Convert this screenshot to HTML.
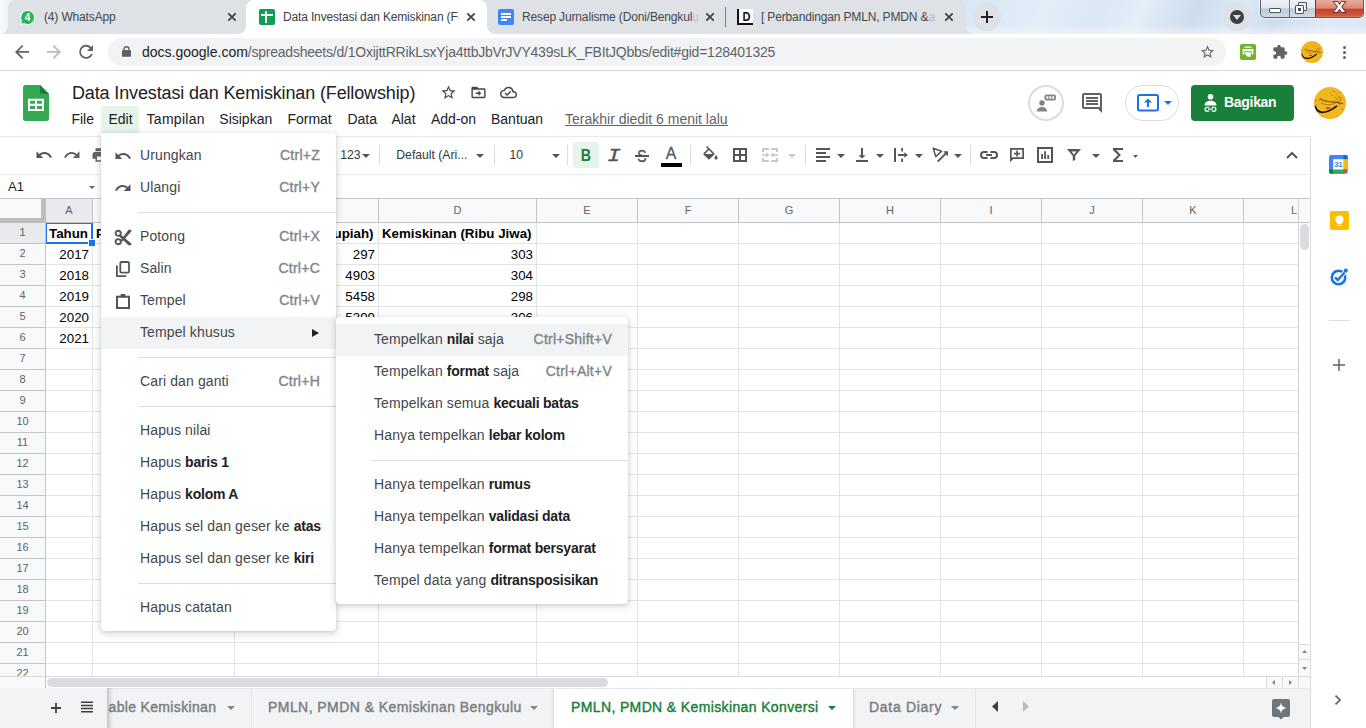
<!DOCTYPE html>
<html lang="id">
<head>
<meta charset="utf-8">
<title>Data Investasi dan Kemiskinan (Fellowship) - Google Spreadsheet</title>
<style>
*{box-sizing:border-box;margin:0;padding:0}
html,body{width:1366px;height:728px;overflow:hidden;background:#fff;font-family:"Liberation Sans",sans-serif;color:#202124}
.abs{position:absolute}
#root{position:relative;width:1366px;height:728px;overflow:hidden}
svg{display:block;overflow:visible}
/* ---------- browser chrome ---------- */
#tabstrip{left:0;top:0;width:1366px;height:34px;background:linear-gradient(90deg,rgba(255,255,255,.8) 0,rgba(255,255,255,0) 18px),linear-gradient(to bottom,rgba(255,255,255,0) 0,rgba(255,255,255,0) 72%,rgba(240,243,248,.75) 100%),linear-gradient(112deg,rgba(255,255,255,0) 0,rgba(255,255,255,.3) 4%,rgba(255,255,255,0) 9%,rgba(255,255,255,0) 70%,rgba(255,255,255,.28) 76%,rgba(255,255,255,.05) 80%,rgba(255,255,255,.3) 83%,rgba(140,165,200,.16) 87%,rgba(255,255,255,.1) 90%,rgba(140,165,200,.14) 93%,rgba(255,255,255,.2) 97%,rgba(255,255,255,0) 100%),#d9e6f5}
.tab{top:0;height:34px;background:#dee1e6;border-radius:8px 8px 0 0}
.tab.active{background:#fff}
.tabtitle{top:9px;letter-spacing:-.15px;font-size:12px;line-height:16px;color:#45474a;white-space:nowrap;overflow:hidden}
.tab.active .tabtitle{color:#3c4043}
#navbar{left:0;top:34px;width:1366px;height:36px;background:#fff}
#navline{left:0;top:70px;width:1366px;height:1px;background:#d5d7da}
#omni{left:108px;top:38px;width:1118px;height:28px;border-radius:14px;background:#f1f3f4}
#url{left:142px;top:44px;font-size:14px;line-height:17px;color:#5f6368;white-space:nowrap;}
#url b{font-weight:normal;color:#202124}
/* ---------- docs header ---------- */
#title{left:72px;top:81px;letter-spacing:-.14px;font-size:18px;line-height:24px;color:#202124;white-space:nowrap}
.menu{top:109px;height:20px;font-size:14px;line-height:20px;color:#202124;white-space:nowrap}
#lastedit{left:565px;top:109px;font-size:14px;line-height:20px;color:#5f6368;white-space:nowrap;background:linear-gradient(#5f6368,#5f6368) 0 16px/100% 1px no-repeat}
/* ---------- toolbar ---------- */
#tbtop{left:0;top:136px;width:1311px;height:1px;background:#e8eaed}
#tbbot{left:0;top:174px;width:1311px;height:1px;background:#e8eaed}
.tbsep{top:145px;width:1px;height:20px;background:#dadce0}
.tbtxt{font-size:12.2px;line-height:16px;color:#33373b;white-space:nowrap}
/* ---------- grid ---------- */
#gridbg{left:0;top:198px;width:1310px;height:490px;background:#fff}
.colh{top:199px;height:23px;font-size:11px;line-height:23px;text-align:center;color:#5f6368}
.rowh{left:0;width:45px;height:20px;font-size:11px;line-height:19px;text-align:center;color:#5f6368}
.vl{top:223px;width:1px;height:453px;background:#e2e3e3}
.hvl{top:199px;width:1px;height:23px;background:#c4c4c4}
.hl{left:46px;width:1252px;height:1px;background:#e2e3e3}
.rhl{left:0;width:45px;height:1px;background:#c4c4c4}
.cell{height:21px;font-size:13.33px;line-height:22px;color:#000;white-space:nowrap;overflow:hidden;font-family:"Liberation Sans",sans-serif}
.r{text-align:right}
.c{text-align:center}
.bd{font-weight:bold}
/* ---------- menus ---------- */
.popup{background:#fff;box-shadow:0 2px 6px 2px rgba(60,64,67,.14),0 1px 3px rgba(60,64,67,.15)}
.mi{position:absolute;left:0;right:0;height:32px;font-size:14px;line-height:32px;color:#43474b;white-space:nowrap}
.mi.hov{background:#f1f3f4}
.mi .lab{position:absolute;top:-1px;letter-spacing:.12px}
.mi .sc{position:absolute;top:-1px;right:16px;color:#80868b;-webkit-text-stroke:.4px #80868b;letter-spacing:.25px}
.mi b{font-weight:bold;color:#202124;letter-spacing:-.22px}
.msep{position:absolute;right:0;height:1px;background:#dadce0}
/* ---------- bottom ---------- */
#bottombar{left:0;top:688px;width:1311px;height:40px;background:#f1f3f4}
.stab{top:688px;height:40px;font-size:14px;line-height:38px;color:#787d83;white-space:nowrap;font-weight:normal;-webkit-text-stroke:.4px;letter-spacing:.44px}
/* ---------- side panel ---------- */
#side{left:1311px;top:137px;width:55px;height:591px;background:#fff}
#sideline{left:1310px;top:136px;width:1px;height:592px;background:#dadce0}
</style>
</head>
<body>
<div id="root">

<!-- ================= BROWSER TAB STRIP ================= -->
<div id="tabstrip" class="abs"></div>

<!-- tab shapes -->
<svg class="abs" style="left:0;top:0" width="1366" height="34" viewBox="0 0 1366 34">
  <path d="M0 34a8 8 0 0 0 8-8V8a8 8 0 0 1 8-8H958a8 8 0 0 1 8 8V26a8 8 0 0 0 8 8z" fill="#dee1e6"/>
  <path d="M238 34a8 8 0 0 0 8-8V8a8 8 0 0 1 8-8H479a8 8 0 0 1 8 8V26a8 8 0 0 0 8 8z" fill="#fff"/>
  <rect x="725" y="7" width="1" height="20" fill="#808387"/><path d="M719 0Q725.500 .5 725.500 5.500 725.500 .5 732 0z" fill="#dce8f6"/>
</svg>
<!-- tab 1 -->
<svg class="abs" style="left:19px;top:9px" width="17" height="17" viewBox="0 0 17 17"><path d="M8.6 1.2a7.2 7.2 0 0 0-6.2 10.9L1.2 16l4-1.2A7.2 7.2 0 1 0 8.6 1.2z" fill="#fff"/><path d="M8.6 2.1a6.4 6.4 0 0 0-5.4 9.8l-.8 2.9 3-.8A6.4 6.4 0 1 0 8.6 2.100z" fill="#1fb855"/><text x="8.6" y="12.2" font-size="10" font-weight="bold" text-anchor="middle" fill="#fff" font-family="Liberation Sans, sans-serif">4</text></svg>
<div class="abs tabtitle" style="left:44px;width:170px">(4) WhatsApp</div>
<svg class="abs" style="left:227px;top:12px" width="10" height="10" viewBox="0 0 10 10"><path d="M1.300 1.300l7.400 7.400M8.700 1.300l-7.400 7.400" stroke="#3c4043" stroke-width="1.700" fill="none"/></svg>
<!-- tab 2 (active) -->
<div class="abs" style="left:259px;top:9px;width:16px;height:16px;background:#0f9d58;border-radius:2px"></div>
<div class="abs" style="left:265px;top:11px;width:2px;height:12px;background:#fff"></div>
<div class="abs" style="left:261px;top:14px;width:12px;height:2px;background:#fff"></div>
<div class="abs tabtitle" id="tt2" style="left:283px;width:176px;color:#3c4043">Data Investasi dan Kemiskinan (F<span style="color:#c9cbce">e</span></div>
<svg class="abs" style="left:466px;top:12px" width="10" height="10" viewBox="0 0 10 10"><path d="M1.300 1.300l7.400 7.400M8.700 1.300l-7.400 7.400" stroke="#3c4043" stroke-width="1.700" fill="none"/></svg>
<!-- tab 3 -->
<div class="abs" style="left:498px;top:9px;width:16px;height:16px;background:#4285f4;border-radius:2px"></div>
<div class="abs" style="left:501px;top:13px;width:10px;height:2px;background:#fff"></div>
<div class="abs" style="left:501px;top:16px;width:10px;height:2px;background:#fff"></div>
<div class="abs" style="left:501px;top:19px;width:6px;height:2px;background:#fff"></div>
<div class="abs tabtitle" id="tt3" style="left:522px;width:176px">Resep Jurnalisme (Doni/Bengkul<span style="color:#b9bcc1">u</span></div>
<svg class="abs" style="left:705px;top:12px" width="10" height="10" viewBox="0 0 10 10"><path d="M1.300 1.300l7.400 7.400M8.700 1.300l-7.400 7.400" stroke="#3c4043" stroke-width="1.700" fill="none"/></svg>
<!-- tab 4 -->
<div class="abs" style="left:737px;top:9px;width:16px;height:16px;background:#fff;border-left:2px solid #111;border-bottom:2px solid #111"></div>
<div class="abs" style="left:739.500px;top:8.700px;width:13px;height:16px;font-size:13px;line-height:16px;font-weight:bold;color:#111;text-align:center;transform:scaleX(.85)">D</div>
<div class="abs tabtitle" id="tt4" style="left:761px;width:176px">[ Perbandingan PMLN, PMDN &amp;<span style="color:#b9bcc1">a</span></div>
<svg class="abs" style="left:944px;top:12px" width="10" height="10" viewBox="0 0 10 10"><path d="M1.300 1.300l7.400 7.400M8.700 1.300l-7.400 7.400" stroke="#3c4043" stroke-width="1.700" fill="none"/></svg>

<!-- new tab button -->
<div class="abs" style="left:973px;top:3px;width:28px;height:28px;border-radius:14px;background:#dee1e6"></div>
<svg class="abs" style="left:981px;top:11px" width="12" height="12" viewBox="0 0 12 12"><path d="M6 0v12M0 6h12" stroke="#202124" stroke-width="2" fill="none"/></svg>

<!-- tab search -->
<div class="abs" style="left:1223px;top:3px;width:28px;height:28px;border-radius:14px;background:#dee1e6"></div>
<div class="abs" style="left:1230px;top:10px;width:14px;height:14px;border-radius:7px;background:#3c4043"></div>
<svg class="abs" style="left:1233px;top:15px" width="8" height="5" viewBox="0 0 8 5"><path d="M0 0h8L4 5z" fill="#dee1e6"/></svg>

<!-- window controls -->
<div class="abs" style="left:1260px;top:0;width:104px;height:18px;border:1px solid #5b6069;border-top:0;border-radius:0 0 5px 5px;background:linear-gradient(#eef2f8 0,#e2e8f1 46%,#c0c9d6 52%,#d2dae6 100%);overflow:hidden;box-shadow:0 0 0 1px rgba(255,255,255,.6)">
  <div class="abs" style="left:28px;top:0;width:1px;height:18px;background:#6b717b"></div>
  <div class="abs" style="left:54px;top:0;width:49px;height:18px;background:linear-gradient(#e9aa9d 0,#dc8776 45%,#c4432b 52%,#cf573b 85%,#e08a6a 100%);border-left:1px solid #6b3a34"></div>
  <div class="abs" style="left:8px;top:8px;width:12px;height:5px;background:#fff;border:1px solid #4d525c;border-radius:1px"></div>
  <div class="abs" style="left:37px;top:2px;width:9px;height:9px;border:1px solid #4d525c;background:#eef1f6;border-radius:1px"></div>
  <div class="abs" style="left:34px;top:5px;width:9px;height:9px;border:1px solid #4d525c;background:#fff;border-radius:1px"></div>
  <div class="abs" style="left:37px;top:8px;width:3px;height:3px;background:#4d525c"></div>
  <div class="abs" style="left:54px;top:-4px;width:49px;height:20px;text-align:center;font-size:18px;line-height:20px;font-weight:bold;color:#fff;-webkit-text-stroke:1.6px #4a2a28;paint-order:stroke fill;transform:scaleX(1.1)">x</div>
</div>

<!-- ================= NAV BAR ================= -->
<div id="navbar" class="abs"></div>
<div id="navline" class="abs"></div>
<div id="omni" class="abs"></div>
<div id="url" class="abs"><b>docs.google.com</b><span style="letter-spacing:-.23px">/spreadsheets/d/1OxijttRRikLsxYja4ttbJbVrJVY439sLK_FBItJQbbs/edit#gid=128401325</span></div>

<svg class="abs" style="left:14px;top:44px" width="16" height="16" viewBox="0 0 16 16"><path d="M15 7.1H4.4l4.9-4.9L8 1 1 8l7 7 1.300-1.300-4.900-4.900H15z" fill="#5f6368"/></svg>
<svg class="abs" style="left:46px;top:44px" width="16" height="16" viewBox="0 0 16 16"><path d="M1 7.1h10.600L6.700 2.200 8 1l7 7-7 7-1.300-1.300 4.900-4.900H1z" fill="#babcbe"/></svg>
<svg class="abs" style="left:78px;top:44px" width="16" height="16" viewBox="0 0 16 16"><path d="M13.100 2.900A7 7 0 1 0 14.800 10h-1.900A5.200 5.200 0 1 1 11.800 4.200L9 7h6V1z" fill="#5f6368"/></svg>
<svg class="abs" style="left:121.500px;top:45.500px" width="9" height="11.700" viewBox="0 0 10 13"><path d="M8.500 4.500V3.600a3.500 3.500 0 0 0-7 0v.9H1a1 1 0 0 0-1 1V11a1 1 0 0 0 1 1h8a1 1 0 0 0 1-1V5.500a1 1 0 0 0-1-1zM3 3.600a2 2 0 0 1 4 0v.9H3z" fill="#5f6368"/></svg>
<svg class="abs" style="left:1199px;top:44px" width="17" height="16" viewBox="0 0 24 24"><path d="M22 9.240l-7.190-.620L12 2 9.190 8.630 2 9.240l5.460 4.730L5.820 21 12 17.270 18.180 21l-1.630-7.030L22 9.240zM12 15.400l-3.760 2.270 1-4.280-3.320-2.880 4.380-.380L12 6.100l1.710 4.040 4.380.380-3.320 2.880 1 4.280L12 15.400z" fill="#5f6368"/></svg>
<div class="abs" style="left:1240px;top:44px;width:16px;height:16px;background:#6eb42c;border-radius:2px"></div>
<svg class="abs" style="left:1240px;top:44px" width="16" height="16" viewBox="0 0 16 16"><path d="M4.500 2.600h7v1.200h-7zM2.600 5h10.800v5.600h-1.700V7.300H4.300v3.300H2.600zM5.200 8.300h5.600v4.400H7.600L5.200 10.400z" fill="#fff"/></svg>
<svg class="abs" style="left:1272px;top:44px" width="16" height="16" viewBox="0 0 24 24"><path d="M20.500 11H19V7c0-1.100-.9-2-2-2h-4V3.500a2.500 2.500 0 0 0-5 0V5H4c-1.100 0-1.990.9-1.990 2v3.800H3.500c1.490 0 2.700 1.210 2.700 2.700s-1.210 2.700-2.700 2.700H2V20c0 1.100.9 2 2 2h3.800v-1.500c0-1.490 1.210-2.700 2.700-2.700s2.700 1.210 2.700 2.700V22H17c1.100 0 2-.9 2-2v-4h1.500a2.500 2.500 0 0 0 0-5z" fill="#5f6368"/></svg>
<div class="abs" style="left:1301px;top:41px;width:22px;height:22px;border-radius:11px;background:#f4b620;overflow:hidden"><svg width="22" height="22" viewBox="0 0 32 32"><path d="M1.300 19.500C3.500 27.500 13 27 22.500 19.200" stroke="#17110a" stroke-width="1.700" fill="none" stroke-linecap="round"/><path d="M5.500 13.200c.3-1.600 1.800-1.800 2-.4C11 14.300 17 15 23 15.300l6 1.500" stroke="#3b3320" stroke-width="1" fill="none" opacity=".85"/><path d="M7 15.500c2 1.700 5 2.300 8 2.200 4-.2 7-1.800 10-3.700l2.500-3.500M24 15.500l2.200 3.300M21.500 13l3.500-3" stroke="#6f5a22" stroke-width=".8" fill="none" opacity=".75"/><rect x="12" y="20.300" width="4.200" height="1.400" fill="#e0261a"/><rect x="7" y="29.300" width="1.500" height="1" fill="#c0261a"/><g fill="#3b3320" opacity=".55"><circle cx="20" cy="4.500" r=".7"/><circle cx="23" cy="7" r=".6"/><circle cx="18" cy="8.500" r=".5"/><circle cx="25.500" cy="10" r=".7"/><circle cx="21.500" cy="10.500" r=".5"/><circle cx="27" cy="13" r=".6"/><circle cx="28.500" cy="22" r=".7"/><circle cx="23.500" cy="30" r=".8"/><circle cx="1.500" cy="13.500" r=".8"/><circle cx="2.500" cy="17.500" r=".6"/><circle cx="16.500" cy="6" r=".5"/><circle cx="26" cy="5.500" r=".5"/></g></svg></div>
<div class="abs" style="left:1343px;top:46px;width:3px;height:3px;border-radius:2px;background:#5f6368"></div>
<div class="abs" style="left:1343px;top:51px;width:3px;height:3px;border-radius:2px;background:#5f6368"></div>
<div class="abs" style="left:1343px;top:56px;width:3px;height:3px;border-radius:2px;background:#5f6368"></div>


<!-- ================= DOC HEADER ================= -->

<!-- sheets logo -->
<svg class="abs" style="left:23px;top:85px" width="26" height="36" viewBox="0 0 26 36"><path d="M2.500 0H17l9 9v24.500a2.500 2.500 0 0 1-2.500 2.500h-21A2.500 2.500 0 0 1 0 33.500v-31A2.500 2.500 0 0 1 2.500 0z" fill="#34a853"/><path d="M17 0l9 9h-6.500A2.500 2.500 0 0 1 17 6.500z" fill="#188038"/><path d="M5 13.700h16v12.400H5zM7 15.800v3h5v-3zM14 15.800v3h5v-3zM7 20.900v3h5v-3zM14 20.900v3h5v-3z" fill="#fff" fill-rule="evenodd"/></svg>
<div id="title" class="abs">Data Investasi dan Kemiskinan (Fellowship)</div>
<!-- star / move / cloud -->
<svg class="abs" style="left:440px;top:84px" width="17" height="17" viewBox="0 0 24 24"><path d="M22 9.240l-7.190-.620L12 2 9.190 8.630 2 9.240l5.460 4.730L5.820 21 12 17.270 18.180 21l-1.630-7.030L22 9.240zM12 15.400l-3.760 2.270 1-4.280-3.320-2.880 4.380-.380L12 6.100l1.710 4.040 4.380.380-3.320 2.880 1 4.280L12 15.400z" fill="#444746"/></svg>
<svg class="abs" style="left:470px;top:84px" width="17" height="17" viewBox="0 0 24 24"><path d="M20 6h-8l-2-2H4c-1.100 0-1.990.9-1.990 2L2 18c0 1.100.9 2 2 2h16c1.100 0 2-.9 2-2V8c0-1.100-.9-2-2-2zm0 12H4V8h16v10zm-8.010-1l4-4-4-4v3H8v2h3.990v3z" fill="#444746"/></svg>
<svg class="abs" style="left:500px;top:84px" width="17" height="17" viewBox="0 0 24 24"><path d="M19.350 10.040A7.490 7.490 0 0 0 12 4C9.110 4 6.600 5.640 5.350 8.040A5.994 5.994 0 0 0 0 14c0 3.310 2.690 6 6 6h13c2.760 0 5-2.240 5-5 0-2.640-2.050-4.780-4.650-4.960zM19 18H6c-2.210 0-4-1.790-4-4s1.790-4 4-4h.710C7.370 7.690 9.480 6 12 6c3.040 0 5.500 2.460 5.500 5.500v.5H19c1.660 0 3 1.340 3 3s-1.340 3-3 3zm-9-3.820l-2.090-2.090L6.500 13.500 10 17l6.010-6.010-1.410-1.410z" fill="#444746"/></svg>
<!-- menubar -->
<div class="abs" style="left:101px;top:106px;width:38px;height:30px;background:#e6f4ea;border-radius:4px 4px 0 0"></div>
<div class="abs menu" style="left:71.400px">File</div>
<div class="abs menu" style="left:108.500px">Edit</div>
<div class="abs menu" style="left:146.500px;letter-spacing:.3px">Tampilan</div>
<div class="abs menu" style="left:219.300px">Sisipkan</div>
<div class="abs menu" style="left:287.400px">Format</div>
<div class="abs menu" style="left:347.400px">Data</div>
<div class="abs menu" style="left:391.400px">Alat</div>
<div class="abs menu" style="left:431px">Add-on</div>
<div class="abs menu" style="left:491px">Bantuan</div>
<div id="lastedit" class="abs">Terakhir diedit 6 menit lalu</div>
<!-- right header buttons -->
<div class="abs" style="left:1028px;top:85px;width:36px;height:36px;border-radius:18px;border:2px solid #dadce0"></div>
<svg class="abs" style="left:1036px;top:92px" width="21" height="21" viewBox="0 0 21 21"><circle cx="6" cy="11" r="2.700" fill="#80868b"/><path d="M.800 19.500c0-3 2.300-4.600 5.200-4.600s5.200 1.600 5.200 4.600z" fill="#80868b"/><rect x="8.500" y="2.500" width="11.500" height="6" rx="2" fill="#80868b"/><rect x="10.400" y="4.300" width="1.900" height="2.400" fill="#fff"/><rect x="13.300" y="4.300" width="1.900" height="2.400" fill="#fff"/><rect x="16.200" y="4.300" width="1.900" height="2.400" fill="#fff"/></svg>
<svg class="abs" style="left:1082px;top:93px" width="20" height="20" viewBox="0 0 20 20"><path d="M2 0h16a2 2 0 0 1 2 2v18l-4-4H2a2 2 0 0 1-2-2V2a2 2 0 0 1 2-2zm0 2v12h16V2zm2 2h12v2H4zm0 3h12v2H4zm0 3h12v2H4z" fill="#5f6368" fill-rule="evenodd"/></svg>
<div class="abs" style="left:1125px;top:85px;width:54px;height:36px;border-radius:18px;border:1px solid #dadce0;background:#fff"></div>
<svg class="abs" style="left:1137px;top:94px" width="22" height="18" viewBox="0 0 22 18"><rect x="1" y="1" width="20" height="15.500" rx="1.500" fill="none" stroke="#1a73e8" stroke-width="2"/><path d="M11 4.500l4 4h-3v4.500h-2V8.500H7z" fill="#1a73e8"/></svg>
<svg class="abs" style="left:1164px;top:101px" width="8" height="4" viewBox="0 0 8 4"><path d="M0 0h8L4 4z" fill="#1a73e8"/></svg>
<div class="abs" style="left:1191px;top:85px;width:103px;height:36px;border-radius:4px;background:#188038"></div>
<svg class="abs" style="left:1203px;top:93px" width="15" height="19" viewBox="0 0 15 19"><circle cx="7.500" cy="3.700" r="2.800" fill="#fff"/><path d="M1.500 12.500c0-3.300 2.600-4.800 6-4.800s6 1.500 6 4.800z" fill="#fff"/><path d="M6.200 14.300H4a1.900 1.900 0 0 0 0 3.800h2.200M8.800 14.300H11a1.900 1.900 0 0 1 0 3.800H8.800M5 16.200h5" stroke="#fff" stroke-width="1.300" fill="none"/></svg>
<div class="abs" id="share" style="left:1224px;top:93px;font-size:14px;line-height:18px;font-weight:bold;color:#fff;white-space:nowrap;letter-spacing:-.3px">Bagikan</div>
<div class="abs" style="left:1314px;top:87px;width:32px;height:32px;border-radius:16px;background:#f4b620;overflow:hidden"><svg width="32" height="32" viewBox="0 0 32 32"><path d="M1.300 19.500C3.500 27.500 13 27 22.500 19.200" stroke="#17110a" stroke-width="1.700" fill="none" stroke-linecap="round"/><path d="M5.500 13.200c.3-1.600 1.800-1.800 2-.4C11 14.300 17 15 23 15.300l6 1.500" stroke="#3b3320" stroke-width="1" fill="none" opacity=".85"/><path d="M7 15.500c2 1.700 5 2.300 8 2.200 4-.2 7-1.800 10-3.700l2.500-3.500M24 15.500l2.200 3.300M21.500 13l3.500-3" stroke="#6f5a22" stroke-width=".8" fill="none" opacity=".75"/><rect x="12" y="20.300" width="4.200" height="1.400" fill="#e0261a"/><rect x="7" y="29.300" width="1.500" height="1" fill="#c0261a"/><g fill="#3b3320" opacity=".55"><circle cx="20" cy="4.500" r=".7"/><circle cx="23" cy="7" r=".6"/><circle cx="18" cy="8.500" r=".5"/><circle cx="25.500" cy="10" r=".7"/><circle cx="21.500" cy="10.500" r=".5"/><circle cx="27" cy="13" r=".6"/><circle cx="28.500" cy="22" r=".7"/><circle cx="23.500" cy="30" r=".8"/><circle cx="1.500" cy="13.500" r=".8"/><circle cx="2.500" cy="17.500" r=".6"/><circle cx="16.500" cy="6" r=".5"/><circle cx="26" cy="5.500" r=".5"/></g></svg></div>


<!-- ================= TOOLBAR ================= -->
<div id="tbtop" class="abs"></div>
<div id="tbbot" class="abs"></div>
<svg class="abs" style="left:34.5px;top:146px" width="18" height="18" viewBox="0 0 24 24"><path d="M12.500 8c-2.650 0-5.050.990-6.900 2.600L2 7v9h9l-3.620-3.620c1.390-1.160 3.160-1.880 5.120-1.880 3.540 0 6.550 2.310 7.600 5.500l2.370-.780C21.080 11.030 17.150 8 12.500 8z" fill="#52565c"/></svg>
<svg class="abs" style="left:63px;top:146px" width="18" height="18" viewBox="0 0 24 24"><path d="M18.400 10.600C16.550 8.990 14.150 8 11.500 8c-4.650 0-8.580 3.030-9.960 7.220L3.900 16c1.050-3.190 4.050-5.500 7.600-5.500 1.950 0 3.730.720 5.120 1.880L13 16h9V7l-3.600 3.600z" fill="#5f6368"/></svg>
<svg class="abs" style="left:90.5px;top:146px" width="18" height="18" viewBox="0 0 24 24"><path d="M19 8H5c-1.660 0-3 1.340-3 3v6h4v4h12v-4h4v-6c0-1.660-1.340-3-3-3zm-3 11H8v-5h8v5zm3-7c-.550 0-1-.450-1-1s.450-1 1-1 1 .450 1 1-.450 1-1 1zm-1-9H6v4h12V3z" fill="#5f6368"/></svg>
<div class="abs tbtxt" id="t123" style="left:340.200px;top:147px">123</div>
<svg class="abs" style="left:362px;top:154px" width="8" height="4" viewBox="0 0 8 4"><path d="M0 0h8L4.0 4z" fill="#52565c"/></svg>
<div class="abs tbsep" style="left:379px"></div>
<div class="abs tbtxt" id="tfont" style="left:396.300px;top:147px">Default (Ari...</div>
<svg class="abs" style="left:476px;top:154px" width="8" height="4" viewBox="0 0 8 4"><path d="M0 0h8L4.0 4z" fill="#52565c"/></svg>
<div class="abs tbsep" style="left:494px"></div>
<div class="abs tbtxt" id="tsize" style="left:509.500px;top:147px">10</div>
<svg class="abs" style="left:551.5px;top:154px" width="8" height="4" viewBox="0 0 8 4"><path d="M0 0h8L4.0 4z" fill="#52565c"/></svg>
<div class="abs tbsep" style="left:567px"></div>
<div class="abs" style="left:573px;top:142px;width:26px;height:26px;border-radius:3px;background:#e6f4ea"></div>
<div class="abs" style="left:573px;top:144.300px;width:26px;height:22px;font-size:16.500px;line-height:22px;font-weight:bold;color:#188038;text-align:center;transform:scaleX(.86)">B</div>
<div class="abs" style="left:601px;top:144.500px;width:26px;height:22px;font-size:18px;line-height:22px;font-style:italic;-webkit-text-stroke:.35px #52565c;color:#52565c;text-align:center;font-family:'Liberation Mono',monospace;transform:scaleX(1.25)">I</div>
<div class="abs" style="left:629px;top:144.600px;width:26px;height:22px;font-size:16.500px;line-height:22px;color:#52565c;text-align:center;-webkit-text-stroke:.45px #52565c;transform:scaleX(.84)">S</div><div class="abs" style="left:636px;top:154.500px;width:12px;height:3px;background:#fff"></div><div class="abs" style="left:635px;top:155px;width:14px;height:2px;background:#52565c"></div>
<div class="abs" style="left:658px;top:142.100px;width:26px;height:22px;font-size:16.500px;line-height:22px;color:#52565c;text-align:center;-webkit-text-stroke:.3px #52565c;transform:scaleX(.96)">A</div><div class="abs" style="left:661px;top:163px;width:21px;height:4px;background:#000"></div>
<div class="abs tbsep" style="left:690px"></div>
<svg class="abs" style="left:700.500px;top:146px" width="19" height="19" viewBox="0 0 24 24"><path d="M16.560 8.940L7.620 0 6.210 1.410l2.380 2.380-5.150 5.150c-.590.590-.590 1.540 0 2.120l5.500 5.500c.290.290.680.440 1.060.440s.770-.150 1.060-.440l5.500-5.500c.590-.580.590-1.530 0-2.120zM5.210 10L10 5.210 14.790 10H5.210zM19 11.500s-2 2.170-2 3.500c0 1.100.9 2 2 2s2-.9 2-2c0-1.330-2-3.500-2-3.500z" fill="#52565c"/></svg>
<svg class="abs" style="left:733px;top:148px" width="14" height="14" viewBox="0 0 14 14"><path d="M0 0h14v14H0zM2 2v4h4V2zM8 2v4h4V2zM2 8v4h4V8zM8 8v4h4V8z" fill="#52565c" fill-rule="evenodd"/></svg>
<svg class="abs" style="left:762px;top:148px" width="16" height="14" viewBox="0 0 16 14"><path d="M0 0h6.800v2H2v2H0zM9.200 0H16v4h-2V2H9.200zM0 14v-4h2v2h4.800v2zM16 14H9.200v-2H14v-2h2zM0 6.200h4.300V4.400L7.600 7 4.300 9.600V7.800H0zM16 6.200h-4.300V4.400L8.400 7l3.300 2.600V7.800H16z" fill="#c6c8ca"/></svg>
<svg class="abs" style="left:788px;top:154px" width="8" height="4" viewBox="0 0 8 4"><path d="M0 0h8L4.0 4z" fill="#c6c8ca"/></svg>
<div class="abs tbsep" style="left:805px"></div>
<svg class="abs" style="left:816px;top:148px" width="14" height="14" viewBox="0 0 14 14"><path d="M0 0h14v2H0zM0 4h10v2H0zM0 8h14v2H0zM0 12h10v2H0z" fill="#52565c"/></svg>
<svg class="abs" style="left:836.5px;top:154px" width="8" height="4" viewBox="0 0 8 4"><path d="M0 0h8L4.0 4z" fill="#52565c"/></svg>
<svg class="abs" style="left:856px;top:148px" width="12" height="14" viewBox="0 0 12 14"><path d="M5 0h2v7.200h2.600L6 10.600 2.400 7.200H5zM0 12h12v2H0z" fill="#52565c"/></svg>
<svg class="abs" style="left:875.5px;top:154px" width="8" height="4" viewBox="0 0 8 4"><path d="M0 0h8L4.0 4z" fill="#52565c"/></svg>
<svg class="abs" style="left:894px;top:148px" width="14" height="14" viewBox="0 0 14 14"><path d="M0 0h2v14H0zM7.200 0h1.800v3.600H7.200zM7.200 10.400h1.800V14H7.200zM4 6h6.400V4.200L13.900 7l-3.500 2.800V8H4z" fill="#52565c"/></svg>
<svg class="abs" style="left:914.5px;top:154px" width="8" height="4" viewBox="0 0 8 4"><path d="M0 0h8L4.0 4z" fill="#52565c"/></svg>
<svg class="abs" style="left:932px;top:147px" width="17" height="16" viewBox="0 0 17 16"><path d="M1.200 1.300l8.300 2.900-2.800 2.700-2.900 2.800z" fill="none" stroke="#52565c" stroke-width="1.500" stroke-linejoin="round"/><path d="M5.600 14.700L14.300 6" stroke="#52565c" stroke-width="1.800" fill="none"/><path d="M16 4.200v5l-1.800-1.700-1.400-1.400-1.700-1.800z" fill="#52565c"/></svg>
<svg class="abs" style="left:953.5px;top:154px" width="8" height="4" viewBox="0 0 8 4"><path d="M0 0h8L4.0 4z" fill="#52565c"/></svg>
<div class="abs tbsep" style="left:970px"></div>
<svg class="abs" style="left:980px;top:151px" width="18" height="8" viewBox="0 0 18 8"><path d="M7.600 1H4a3 3 0 0 0 0 6h3.600M10.400 1H14a3 3 0 0 1 0 6h-3.600" fill="none" stroke="#52565c" stroke-width="2"/><rect x="6" y="3" width="6" height="2" fill="#52565c"/></svg>
<svg class="abs" style="left:1010px;top:148px" width="14" height="14" viewBox="0 0 14 14"><path d="M0 0h14v11H3.400L0 14zM1.700 1.700v8.200l.6-.6h10V1.700z" fill="#52565c" fill-rule="evenodd"/><path d="M6.200 2.600h1.600v2.200H10v1.600H7.800v2.200H6.200V6.400H4V4.800h2.200z" fill="#52565c"/></svg>
<svg class="abs" style="left:1037px;top:147px" width="16" height="16" viewBox="0 0 16 16"><path d="M0 0h16v16H0zM2 2v12h12V2z" fill="#52565c" fill-rule="evenodd"/><path d="M4.200 7h1.800v5H4.200zM7.200 4.200H9V12H7.200zM10.300 8.100h1.800V12h-1.800z" fill="#52565c"/></svg>
<svg class="abs" style="left:1067px;top:149px" width="14" height="12" viewBox="0 0 14 12"><path d="M0 0h14L8.200 6.900V11l-2.400 1V6.900zM4.500 2.600l2.500 2.900L9.500 2.600z" fill="#52565c" fill-rule="evenodd"/></svg>
<svg class="abs" style="left:1092.2px;top:154px" width="8" height="4" viewBox="0 0 8 4"><path d="M0 0h8L4.0 4z" fill="#52565c"/></svg>
<svg class="abs" style="left:1113px;top:148px" width="10" height="14" viewBox="0 0 10 14"><path d="M10 0H0v1.900l5 5.100-5 5.100V14h10v-2H3.100l4.800-5-4.800-5H10z" fill="#52565c"/></svg>
<svg class="abs" style="left:1133px;top:155px" width="5" height="3" viewBox="0 0 5 3"><path d="M0 0h5L2.5 3z" fill="#52565c"/></svg>
<svg class="abs" style="left:1286px;top:151px" width="12" height="8" viewBox="0 0 12 8"><path d="M1 7l5-5 5 5" fill="none" stroke="#52565c" stroke-width="2"/></svg>
<div class="abs" id="namebox" style="left:8px;top:179px;font-size:13px;line-height:16px;color:#202124">A1</div>
<svg class="abs" style="left:88.5px;top:186px" width="6" height="3" viewBox="0 0 6 3"><path d="M0 0h6L3.0 3z" fill="#5f6368"/></svg>


<!-- ================= GRID ================= -->
<div id="gridbg" class="abs"></div>
<div class="abs" style="left:0;top:199px;width:1310px;height:23px;background:#f8f9fa"></div>
<div class="abs" style="left:0;top:223px;width:45px;height:465px;background:#f8f9fa"></div>
<div class="abs" style="left:46px;top:199px;width:46px;height:23px;background:#e8eaed"></div>
<div class="abs" style="left:0;top:223px;width:45px;height:20px;background:#e8eaed"></div>
<div class="abs" style="left:0;top:198px;width:1310px;height:1px;background:#c4c4c4"></div>
<div class="abs" style="left:46px;top:222px;width:1264px;height:1px;background:#c4c4c4"></div>
<div class="abs colh" style="left:46px;width:46px">A</div><div class="abs hvl" style="left:92px"></div><div class="abs vl" style="left:92px"></div>
<div class="abs colh" style="left:93px;width:141px">B</div><div class="abs hvl" style="left:234px"></div><div class="abs vl" style="left:234px"></div>
<div class="abs colh" style="left:235px;width:143px">C</div><div class="abs hvl" style="left:378px"></div><div class="abs vl" style="left:378px"></div>
<div class="abs colh" style="left:379px;width:157px">D</div><div class="abs hvl" style="left:536px"></div><div class="abs vl" style="left:536px"></div>
<div class="abs colh" style="left:537px;width:100px">E</div><div class="abs hvl" style="left:637px"></div><div class="abs vl" style="left:637px"></div>
<div class="abs colh" style="left:638px;width:100px">F</div><div class="abs hvl" style="left:738px"></div><div class="abs vl" style="left:738px"></div>
<div class="abs colh" style="left:739px;width:100px">G</div><div class="abs hvl" style="left:839px"></div><div class="abs vl" style="left:839px"></div>
<div class="abs colh" style="left:840px;width:100px">H</div><div class="abs hvl" style="left:940px"></div><div class="abs vl" style="left:940px"></div>
<div class="abs colh" style="left:941px;width:100px">I</div><div class="abs hvl" style="left:1041px"></div><div class="abs vl" style="left:1041px"></div>
<div class="abs colh" style="left:1042px;width:100px">J</div><div class="abs hvl" style="left:1142px"></div><div class="abs vl" style="left:1142px"></div>
<div class="abs colh" style="left:1143px;width:100px">K</div><div class="abs hvl" style="left:1243px"></div><div class="abs vl" style="left:1243px"></div>
<div class="abs colh" style="left:1244px;width:54px;overflow:hidden"><div style="width:100px">L</div></div>
<div class="abs" style="left:1298px;top:199px;width:1px;height:477px;background:#d4d4d4"></div>
<div class="abs rowh" style="top:223px;height:20px;overflow:hidden">1</div><div class="abs rhl" style="top:243px"></div><div class="abs hl" style="top:243px"></div>
<div class="abs rowh" style="top:244px;height:20px;overflow:hidden">2</div><div class="abs rhl" style="top:264px"></div><div class="abs hl" style="top:264px"></div>
<div class="abs rowh" style="top:265px;height:20px;overflow:hidden">3</div><div class="abs rhl" style="top:285px"></div><div class="abs hl" style="top:285px"></div>
<div class="abs rowh" style="top:286px;height:20px;overflow:hidden">4</div><div class="abs rhl" style="top:306px"></div><div class="abs hl" style="top:306px"></div>
<div class="abs rowh" style="top:307px;height:20px;overflow:hidden">5</div><div class="abs rhl" style="top:327px"></div><div class="abs hl" style="top:327px"></div>
<div class="abs rowh" style="top:328px;height:20px;overflow:hidden">6</div><div class="abs rhl" style="top:348px"></div><div class="abs hl" style="top:348px"></div>
<div class="abs rowh" style="top:349px;height:20px;overflow:hidden">7</div><div class="abs rhl" style="top:369px"></div><div class="abs hl" style="top:369px"></div>
<div class="abs rowh" style="top:370px;height:20px;overflow:hidden">8</div><div class="abs rhl" style="top:390px"></div><div class="abs hl" style="top:390px"></div>
<div class="abs rowh" style="top:391px;height:20px;overflow:hidden">9</div><div class="abs rhl" style="top:411px"></div><div class="abs hl" style="top:411px"></div>
<div class="abs rowh" style="top:412px;height:20px;overflow:hidden">10</div><div class="abs rhl" style="top:432px"></div><div class="abs hl" style="top:432px"></div>
<div class="abs rowh" style="top:433px;height:20px;overflow:hidden">11</div><div class="abs rhl" style="top:453px"></div><div class="abs hl" style="top:453px"></div>
<div class="abs rowh" style="top:454px;height:20px;overflow:hidden">12</div><div class="abs rhl" style="top:474px"></div><div class="abs hl" style="top:474px"></div>
<div class="abs rowh" style="top:475px;height:20px;overflow:hidden">13</div><div class="abs rhl" style="top:495px"></div><div class="abs hl" style="top:495px"></div>
<div class="abs rowh" style="top:496px;height:20px;overflow:hidden">14</div><div class="abs rhl" style="top:516px"></div><div class="abs hl" style="top:516px"></div>
<div class="abs rowh" style="top:517px;height:20px;overflow:hidden">15</div><div class="abs rhl" style="top:537px"></div><div class="abs hl" style="top:537px"></div>
<div class="abs rowh" style="top:538px;height:20px;overflow:hidden">16</div><div class="abs rhl" style="top:558px"></div><div class="abs hl" style="top:558px"></div>
<div class="abs rowh" style="top:559px;height:20px;overflow:hidden">17</div><div class="abs rhl" style="top:579px"></div><div class="abs hl" style="top:579px"></div>
<div class="abs rowh" style="top:580px;height:20px;overflow:hidden">18</div><div class="abs rhl" style="top:600px"></div><div class="abs hl" style="top:600px"></div>
<div class="abs rowh" style="top:601px;height:20px;overflow:hidden">19</div><div class="abs rhl" style="top:621px"></div><div class="abs hl" style="top:621px"></div>
<div class="abs rowh" style="top:622px;height:20px;overflow:hidden">20</div><div class="abs rhl" style="top:642px"></div><div class="abs hl" style="top:642px"></div>
<div class="abs rowh" style="top:643px;height:20px;overflow:hidden">21</div><div class="abs rhl" style="top:663px"></div><div class="abs hl" style="top:663px"></div>
<div class="abs rowh" style="top:664px;height:12px;overflow:hidden">22</div><div class="abs" style="left:45px;top:223px;width:1px;height:465px;background:#c4c4c4"></div>
<div class="abs" style="left:0;top:218px;width:46px;height:5px;background:#bdbdbd"></div>
<div class="abs" style="left:41px;top:199px;width:5px;height:24px;background:#bdbdbd"></div>
<div class="abs cell bd c" style="left:48.500px;top:223px;width:40px">Tahun</div>
<div class="abs cell bd" style="left:96px;top:223px;width:135px">PMLN (Juta Dolar AS)</div>
<div class="abs cell bd r" style="left:236.500px;top:223px;width:137px">PMDN (Miliar Rupiah)</div>
<div class="abs cell bd r" style="left:380.500px;top:223px;width:151px">Kemiskinan (Ribu Jiwa)</div>
<div class="abs cell r" style="left:49px;top:244px;width:40px">2017</div>
<div class="abs cell r" style="left:96px;top:244px;width:135px">138,5</div>
<div class="abs cell r" style="left:238px;top:244px;width:137px">297</div>
<div class="abs cell r" style="left:382px;top:244px;width:151px">303</div>
<div class="abs cell r" style="left:49px;top:265px;width:40px">2018</div>
<div class="abs cell r" style="left:96px;top:265px;width:135px">136,6</div>
<div class="abs cell r" style="left:238px;top:265px;width:137px">4903</div>
<div class="abs cell r" style="left:382px;top:265px;width:151px">304</div>
<div class="abs cell r" style="left:49px;top:286px;width:40px">2019</div>
<div class="abs cell r" style="left:96px;top:286px;width:135px">144,8</div>
<div class="abs cell r" style="left:238px;top:286px;width:137px">5458</div>
<div class="abs cell r" style="left:382px;top:286px;width:151px">298</div>
<div class="abs cell r" style="left:49px;top:307px;width:40px">2020</div>
<div class="abs cell r" style="left:96px;top:307px;width:135px">186,9</div>
<div class="abs cell r" style="left:238px;top:307px;width:137px">5399</div>
<div class="abs cell r" style="left:382px;top:307px;width:151px">306</div>
<div class="abs cell r" style="left:49px;top:328px;width:40px">2021</div>
<div class="abs cell r" style="left:96px;top:328px;width:135px">93,2</div>
<div class="abs cell r" style="left:238px;top:328px;width:137px">2178</div>
<div class="abs cell r" style="left:382px;top:328px;width:151px">306</div>
<div class="abs" style="left:46px;top:223px;width:47px;height:21px;border:2px solid #1a73e8;border-left-width:1px;border-top-width:1px"></div>
<div class="abs" style="left:88px;top:239px;width:7px;height:7px;background:#1a73e8;border:1px solid #fff;border-right:0;border-bottom:0"></div>
<div class="abs" style="left:0;top:676px;width:1310px;height:1px;background:#d9d9d9"></div>
<div class="abs" style="left:46px;top:677px;width:1264px;height:11px;background:#fff"></div>
<div class="abs" style="left:47px;top:678px;width:561px;height:9px;border-radius:5px;background:#dadce0"></div>
<div class="abs" style="left:1299px;top:223px;width:11px;height:453px;background:#fff"></div>
<div class="abs" style="left:1300px;top:224px;width:9px;height:26px;border-radius:5px;background:#dadce0"></div>


<!-- ================= BOTTOM ================= -->
<div id="bottombar" class="abs"></div>
<div class="abs" style="left:1299px;top:644px;width:11px;height:16px;background:#f8f9fa;border-top:1px solid #dadce0;border-bottom:1px solid #dadce0"></div>
<div class="abs" style="left:1299px;top:660px;width:11px;height:16px;background:#f8f9fa"></div>
<svg class="abs" style="left:1302px;top:650px" width="5" height="3" viewBox="0 0 5 3"><path d="M0 3h5L2.500 0z" fill="#80868b"/></svg>
<svg class="abs" style="left:1302px;top:667px" width="5" height="3" viewBox="0 0 5 3"><path d="M0 0h5L2.500 3z" fill="#80868b"/></svg>
<div class="abs" style="left:1266px;top:677px;width:44px;height:11px;background:#f8f9fa;border-left:1px solid #dadce0"></div>
<div class="abs" style="left:1282px;top:677px;width:1px;height:11px;background:#dadce0"></div>
<div class="abs" style="left:1298px;top:677px;width:1px;height:11px;background:#dadce0"></div>
<svg class="abs" style="left:1272px;top:680px" width="3" height="5" viewBox="0 0 3 5"><path d="M3 0v5L0 2.500z" fill="#80868b"/></svg>
<svg class="abs" style="left:1289px;top:680px" width="3" height="5" viewBox="0 0 3 5"><path d="M0 0v5L3 2.500z" fill="#80868b"/></svg>
<div class="abs stab" id="st1" style="left:108.500px;letter-spacing:.34px">able Kemiskinan</div>
<svg class="abs" style="left:227px;top:706px" width="8" height="4" viewBox="0 0 8 4"><path d="M0 0h8L4.0 4z" fill="#80868b"/></svg>
<div class="abs" style="left:251px;top:688px;width:1px;height:40px;background:#e3e5e8"></div>
<div class="abs stab" id="st2" style="left:268px">PMLN, PMDN &amp; Kemiskinan Bengkulu</div>
<svg class="abs" style="left:530px;top:706px" width="8" height="4" viewBox="0 0 8 4"><path d="M0 0h8L4.0 4z" fill="#80868b"/></svg>
<div class="abs" style="left:540px;top:688px;width:327px;height:40px;overflow:hidden"><div class="abs" style="left:14px;top:0;width:299px;height:44px;background:#fff;box-shadow:0 0 3px rgba(60,64,67,.3)"></div></div>
<div class="abs" style="left:0;top:688px;width:1310px;height:1px;background:#e6e8eb"></div>
<div class="abs stab" id="st3" style="left:571px;color:#188038;letter-spacing:.37px">PMLN, PMDN &amp; Kemiskinan Konversi</div>
<svg class="abs" style="left:828px;top:706px" width="8" height="4" viewBox="0 0 8 4"><path d="M0 0h8L4.0 4z" fill="#188038"/></svg>
<div class="abs stab" id="st4" style="left:869px;letter-spacing:.7px">Data Diary</div>
<svg class="abs" style="left:951px;top:706px" width="8" height="4" viewBox="0 0 8 4"><path d="M0 0h8L4.0 4z" fill="#80868b"/></svg>
<div class="abs" style="left:975px;top:688px;width:1px;height:40px;background:#e3e5e8"></div>
<svg class="abs" style="left:992px;top:701px" width="6" height="11" viewBox="0 0 6 11"><path d="M6 0v11L0 5.500z" fill="#3c4043"/></svg>
<svg class="abs" style="left:1023px;top:701px" width="6" height="11" viewBox="0 0 6 11"><path d="M0 0v11L6 5.500z" fill="#b8bbbf"/></svg>
<div class="abs" style="left:0;top:688px;width:107px;height:40px;background:#f1f3f4"></div>
<div class="abs" style="left:107px;top:688px;width:6px;height:40px;background:linear-gradient(90deg,rgba(60,64,67,.25),rgba(60,64,67,0))"></div>
<svg class="abs" style="left:51px;top:702.500px" width="10" height="10" viewBox="0 0 10 10"><path d="M5 0v10M0 5h10" stroke="#3c4043" stroke-width="1.800" fill="none"/></svg>
<svg class="abs" style="left:81px;top:701px" width="12" height="12" viewBox="0 0 12 12"><path d="M0 1.200h12M0 4.400h12M0 7.600h12M0 10.800h12" stroke="#3c4043" stroke-width="1.500" fill="none"/></svg>
<svg class="abs" style="left:1272px;top:699px" width="18" height="21" viewBox="0 0 18 21"><path d="M2 0h14a2 2 0 0 1 2 2v14a2 2 0 0 1-2 2h-4.500L9 20.500 6.500 18H2a2 2 0 0 1-2-2V2a2 2 0 0 1 2-2z" fill="#70757a"/><path d="M9 3.500c.6 3.400 2.100 4.900 5.500 5.500-3.400.6-4.900 2.100-5.500 5.500C8.400 11.100 6.900 9.600 3.500 9 6.900 8.400 8.400 6.900 9 3.500z" fill="#fff"/></svg>


<!-- ================= SIDE PANEL ================= -->
<div id="side" class="abs"></div>
<div id="sideline" class="abs"></div>

<!-- calendar -->
<svg class="abs" style="left:1329.200px;top:154.500px" width="18.700" height="18.700" viewBox="0 0 20 20"><rect x="0" y="0" width="20" height="20" rx="2" fill="#4285f4"/><path d="M15.500 0H18a2 2 0 0 1 2 2v2.500h-4.500z" fill="#1967d2"/><rect x="15.500" y="4.500" width="4.500" height="11" fill="#fbbc04"/><path d="M0 15.500h4.500V20H2a2 2 0 0 1-2-2z" fill="#188038"/><rect x="4.500" y="15.500" width="11" height="4.500" fill="#34a853"/><path d="M15.500 15.500H20L15.500 20z" fill="#ea4335"/><rect x="4.500" y="4.500" width="11" height="11" fill="#fff"/><text x="10" y="13.300" font-size="8.500" font-weight="bold" text-anchor="middle" fill="#4285f4" font-family="Liberation Sans, sans-serif" letter-spacing="-.4">31</text></svg>
<!-- keep -->
<svg class="abs" style="left:1329.500px;top:210.500px" width="19" height="19" viewBox="0 0 19 19"><rect width="19" height="19" rx="2" fill="#fbbc04"/><circle cx="9.500" cy="8.500" r="4" fill="#fff"/><rect x="7.500" y="11.500" width="4" height="1.500" fill="#fff"/><rect x="7.500" y="13.800" width="4" height="1.200" fill="#fff"/></svg>
<!-- tasks -->
<svg class="abs" style="left:1330px;top:267px" width="19" height="19" viewBox="0 0 19 19"><circle cx="8.500" cy="10.500" r="6.700" fill="none" stroke="#1a73e8" stroke-width="2.600"/><path d="M4.800 10.200l2.900 2.900 8.300-9.300" fill="none" stroke="#fff" stroke-width="4.200"/><path d="M5 10.300l2.800 2.800 6.800-7.600" fill="none" stroke="#1a73e8" stroke-width="2.400"/><circle cx="15.800" cy="3.600" r="2.100" fill="#1a73e8"/></svg>
<div class="abs" style="left:1329px;top:320px;width:20px;height:1px;background:#dadce0"></div>
<svg class="abs" style="left:1333px;top:359px" width="12" height="12" viewBox="0 0 12 12"><path d="M6 0v12M0 6h12" stroke="#5f6368" stroke-width="1.500" fill="none"/></svg>
<svg class="abs" style="left:1334px;top:695px" width="8" height="10" viewBox="0 0 8 10"><path d="M1.500 .7l4.500 4.300-4.500 4.300" stroke="#5f6368" stroke-width="1.700" fill="none"/></svg>


<!-- ================= MENUS ================= -->
<div id="editmenu" class="abs popup" style="left:101px;top:133px;width:235px;height:498px;border-radius:0 4px 4px 4px">
<div class="mi" style="top:7px"><svg class="abs" style="left:13px;top:7px" width="18" height="18" viewBox="0 0 24 24"><path d="M12.500 8c-2.650 0-5.050.990-6.900 2.600L2 7v9h9l-3.620-3.620c1.390-1.160 3.160-1.880 5.120-1.880 3.540 0 6.550 2.310 7.600 5.500l2.370-.780C21.080 11.030 17.150 8 12.500 8z" fill="#52565c"/></svg><span class="lab" style="left:39px">Urungkan</span><span class="sc">Ctrl+Z</span></div>
<div class="mi" style="top:39px"><svg class="abs" style="left:13px;top:7px" width="18" height="18" viewBox="0 0 24 24"><path d="M18.400 10.600C16.550 8.990 14.150 8 11.500 8c-4.650 0-8.580 3.030-9.960 7.220L3.900 16c1.050-3.190 4.050-5.500 7.600-5.500 1.950 0 3.730.720 5.120 1.880L13 16h9V7l-3.600 3.600z" fill="#52565c"/></svg><span class="lab" style="left:39px">Ulangi</span><span class="sc">Ctrl+Y</span></div>
<div class="msep" style="left:37px;top:79px"></div>
<div class="mi" style="top:88px"><svg class="abs" style="left:13px;top:8px" width="18" height="17" viewBox="0 0 18 17"><circle cx="4.200" cy="4.300" r="2.600" fill="none" stroke="#52565c" stroke-width="1.900"/><circle cx="4.200" cy="12.700" r="2.600" fill="none" stroke="#52565c" stroke-width="1.900"/><path d="M6.300 5.300L17.300 14.600v1.700h-2.800L5.200 7.400zM6.300 11.700L14.500 .7h2.800v1.700L7.900 13z" fill="#52565c"/></svg><span class="lab" style="left:39px">Potong</span><span class="sc">Ctrl+X</span></div>
<div class="mi" style="top:120px"><svg class="abs" style="left:15px;top:8px" width="14" height="17" viewBox="0 0 14 17"><rect x="4.300" y="1" width="8.700" height="10.700" rx="1.200" fill="none" stroke="#52565c" stroke-width="1.800"/><path d="M.9 4.600v10.600h9.300" fill="none" stroke="#52565c" stroke-width="1.800"/></svg><span class="lab" style="left:39px">Salin</span><span class="sc">Ctrl+C</span></div>
<div class="mi" style="top:152px"><svg class="abs" style="left:15px;top:9px" width="14" height="15" viewBox="0 0 14 15"><rect x="1" y="2.700" width="12" height="11.300" fill="none" stroke="#52565c" stroke-width="2"/><rect x="4.500" y="0" width="5" height="3.600" rx="1" fill="#52565c"/></svg><span class="lab" style="left:39px">Tempel</span><span class="sc">Ctrl+V</span></div>
<div class="mi hov" style="top:184px"><svg class="abs" style="left:211px;top:12px" width="7" height="8" viewBox="0 0 7 8"><path d="M0 0l7 4-7 4z" fill="#202124"/></svg><span class="lab" style="left:39px">Tempel khusus</span></div>
<div class="msep" style="left:37px;top:224px"></div>
<div class="mi" style="top:233px"><span class="lab" style="left:39px">Cari dan ganti</span><span class="sc">Ctrl+H</span></div>
<div class="msep" style="left:37px;top:273px"></div>
<div class="mi" style="top:282px"><span class="lab" style="left:39px">Hapus nilai</span></div>
<div class="mi" style="top:314px"><span class="lab" style="left:39px">Hapus <b>baris 1</b></span></div>
<div class="mi" style="top:346px"><span class="lab" style="left:39px">Hapus <b>kolom A</b></span></div>
<div class="mi" style="top:378px"><span class="lab" style="left:39px">Hapus sel dan geser ke <b>atas</b></span></div>
<div class="mi" style="top:410px"><span class="lab" style="left:39px">Hapus sel dan geser ke <b>kiri</b></span></div>
<div class="msep" style="left:37px;top:450px"></div>
<div class="mi" style="top:459px"><span class="lab" style="left:39px">Hapus catatan</span></div>
</div>
<div id="submenu" class="abs popup" style="left:336px;top:317px;width:292px;height:287px;border-radius:4px">
<div class="mi hov" style="top:7px"><span class="lab" style="left:38px">Tempelkan <b>nilai</b> saja</span><span class="sc">Ctrl+Shift+V</span></div>
<div class="mi" style="top:39px"><span class="lab" style="left:38px">Tempelkan <b>format</b> saja</span><span class="sc">Ctrl+Alt+V</span></div>
<div class="mi" style="top:71px"><span class="lab" style="left:38px">Tempelkan semua <b>kecuali batas</b></span></div>
<div class="mi" style="top:103px"><span class="lab" style="left:38px">Hanya tempelkan <b>lebar kolom</b></span></div>
<div class="msep" style="left:36px;top:143px"></div>
<div class="mi" style="top:152px"><span class="lab" style="left:38px">Hanya tempelkan <b>rumus</b></span></div>
<div class="mi" style="top:184px"><span class="lab" style="left:38px">Hanya tempelkan <b>validasi data</b></span></div>
<div class="mi" style="top:216px"><span class="lab" style="left:38px">Hanya tempelkan <b>format bersyarat</b></span></div>
<div class="mi" style="top:248px"><span class="lab" style="left:38px">Tempel data yang <b>ditransposisikan</b></span></div>
</div>


</div>
</body>
</html>
